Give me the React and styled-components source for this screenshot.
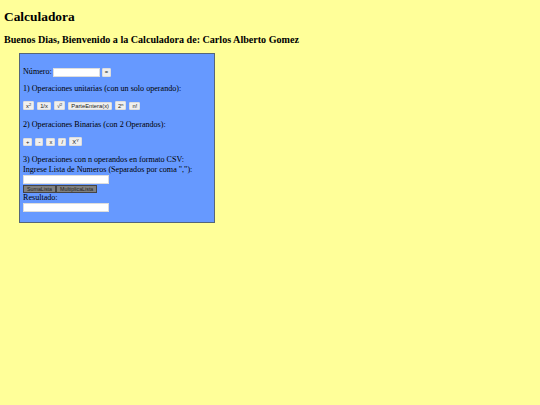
import React from 'react'
import styled, { createGlobalStyle } from 'styled-components'

const GlobalStyle = createGlobalStyle`
  html, body {
    margin: 0;
    padding: 0;
    height: 100%;
    background: #ffff99;
  }
  body {
    font-family: "Liberation Serif", "Times New Roman", serif;
    color: #000;
  }
`

function App() {
  return (
    <Page>
      <GlobalStyle />
      <Title>Calculadora</Title>
      <Welcome>Buenos Dias, Bienvenido a la Calculadora de: Carlos Alberto Gomez</Welcome>
      <Panel>
        <NumberRow>
          Número:
          <TextInput $width={47} />
          <EqualsButton>=</EqualsButton>
        </NumberRow>
        <Label>1) Operaciones unitarias (con un solo operando):</Label>
        <ButtonRow>
          <OpButton $tall>x<sup>2</sup></OpButton>
          <OpButton>1/x</OpButton>
          <OpButton $tall>√<sup>2</sup></OpButton>
          <OpButton>ParteEntera(x)</OpButton>
          <OpButton $tall>2<sup>n</sup></OpButton>
          <OpButton>n!</OpButton>
        </ButtonRow>
        <Label $gap={9}>2) Operaciones Binarias (con 2 Operandos):</Label>
        <ButtonRow>
          <OpButton>+</OpButton>
          <OpButton>-</OpButton>
          <OpButton>x</OpButton>
          <OpButton>/</OpButton>
          <OpButton $tall>X<sup>Y</sup></OpButton>
        </ButtonRow>
        <CsvBlock>
          <div>3) Operaciones con n operandos en formato CSV:</div>
          <div>Ingrese Lista de Numeros (Separados por coma ","):</div>
          <TextInput $width={86} />
          <ListRow>
            <ListButton>SumaLista</ListButton>
            <ListButton>MultiplicaLista</ListButton>
          </ListRow>
          <div>Resultado:</div>
          <TextInput $width={86} />
        </CsvBlock>
      </Panel>
    </Page>
  )
}

export default App

const Page = styled.div`
  min-height: 405px;
  padding: 10px 4px 0;
  box-sizing: border-box;
`

const Title = styled.h1`
  margin: 0;
  font-size: 13.4px;
  line-height: 14px;
  font-weight: bold;
`

const Welcome = styled.h3`
  margin: 10px 0 0;
  font-size: 10.1px;
  line-height: 12px;
  font-weight: bold;
`

const Panel = styled.div`
  box-sizing: border-box;
  width: 196px;
  height: 170px;
  margin: 7px 0 0 15px;
  padding: 13px 3px 0;
  background: #6699ff;
  border: 1px solid #556677;
  font-size: 8.1px;
  line-height: 10px;
`

const NumberRow = styled.div`
  display: flex;
  align-items: center;
  gap: 1px;
`

const Label = styled.div`
  margin-top: ${props => props.$gap || 7}px;
`

const TextInput = styled.input`
  box-sizing: border-box;
  display: block;
  width: ${props => props.$width}px;
  height: 9px;
  padding: 0;
  background: #fff;
  border: 1px solid #dddddd;
`

const ButtonRow = styled.div`
  display: flex;
  align-items: flex-end;
  gap: 3px;
  margin-top: 6px;
  height: 11px;
`

const OpButton = styled.button`
  box-sizing: border-box;
  height: ${props => (props.$tall ? 9 : 8)}px;
  min-width: 8px;
  padding: 0 2px;
  margin: 0 0 1px;
  background: #efefef;
  border: 1px solid #dddddd;
  border-radius: 1px;
  font-family: "Liberation Sans", Arial, sans-serif;
  font-size: 5.8px;
  line-height: 6px;
  color: #222222;

  sup {
    font-size: 4px;
    line-height: 0;
    vertical-align: 2px;
  }
`

const EqualsButton = styled(OpButton)`
  height: 9px;
  min-width: 9px;
  margin: 0 0 0 1px;
`

const CsvBlock = styled.div`
  margin-top: 8px;
`

const ListRow = styled.div`
  display: flex;
  align-items: flex-end;
  height: 9px;
`

const ListButton = styled.button`
  box-sizing: border-box;
  height: 8px;
  padding: 0 3px;
  margin: 0;
  background: #808080;
  border: 1px solid #444444;
  font-family: "Liberation Sans", Arial, sans-serif;
  font-size: 5.3px;
  line-height: 6px;
  color: #222222;
`
